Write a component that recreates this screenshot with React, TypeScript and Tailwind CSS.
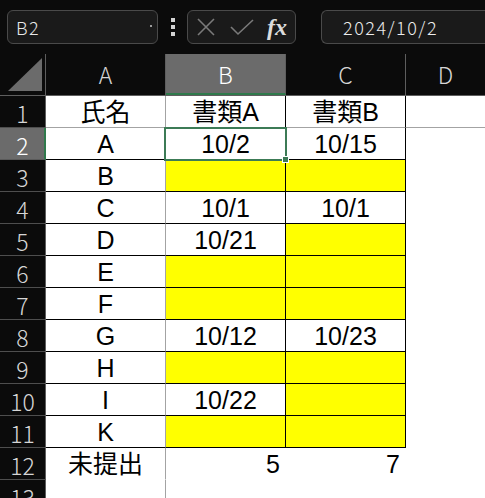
import React from 'react';

const GREEN = '#3c7b56';

// null = yellow (not submitted)
const data: (string | null)[][] = [
  ['氏名', '書類A', '書類B'],
  ['A', '10/2', '10/15'],
  ['B', null, null],
  ['C', '10/1', '10/1'],
  ['D', '10/21', null],
  ['E', null, null],
  ['F', null, null],
  ['G', '10/12', '10/23'],
  ['H', null, null],
  ['I', '10/22', null],
  ['K', null, null],
  ['未提出', '5', '7'],
  ['', '', ''],
];

const headFont = { fontFamily: '"Noto Sans CJK JP", "Noto Sans", sans-serif' };
const cellFont = { fontFamily: '"Liberation Sans", "Noto Sans CJK JP", sans-serif' };

function TopBar() {
  return (
    <div className="flex h-[54px] items-center bg-[#0b0b0b]" style={headFont}>
      <div className="ml-[7px] flex h-[34px] w-[151px] items-center justify-between rounded-[6px] border border-[#4a4a4a] bg-[#1a1a1a] pl-[8px] pr-[5px]">
        <span className="text-[18px] font-light tracking-[1.5px] text-[#e8e8e8]">B2</span>
        <span className="mt-[-2px] h-[2px] w-[2px] bg-[#9a9a9a]" />
      </div>
      <div className="ml-[13px] flex w-[4px] flex-col gap-[3px]">
        <span className="h-[4px] w-[4px] bg-[#d4d4d4]" />
        <span className="h-[4px] w-[4px] bg-[#d4d4d4]" />
        <span className="h-[4px] w-[4px] bg-[#d4d4d4]" />
      </div>
      <div className="ml-[12px] flex h-[34px] w-[109px] items-center rounded-[6px] border border-[#4a4a4a] bg-[#1a1a1a] pl-[8px]">
        <svg width="20" height="20" viewBox="0 0 20 20" className="shrink-0">
          <path d="M2 2 L18 18 M18 2 L2 18" stroke="#7a7a7a" strokeWidth="1.6" fill="none" />
        </svg>
        <svg width="26" height="18" viewBox="0 0 26 18" className="ml-[13px] shrink-0">
          <path d="M2 9 L9 16 L24 2" stroke="#7a7a7a" strokeWidth="1.6" fill="none" />
        </svg>
        <span
          className="ml-[12px] text-[24px] font-bold italic leading-none text-[#dcdcdc]"
          style={{ fontFamily: '"Liberation Serif", serif' }}
        >
          fx
        </span>
      </div>
      <div className="ml-[25px] flex h-[34px] flex-1 items-center rounded-l-[6px] border border-r-0 border-[#4a4a4a] bg-[#1a1a1a] pl-[21px]">
        <span className="text-[18px] font-light tracking-[1.5px] text-[#ededed]">2024/10/2</span>
      </div>
    </div>
  );
}

function ColumnHeader() {
  const cols = ['A', 'B', 'C', 'D'];
  return (
    <div className="flex h-[42px] border-b border-[#5e5e5e] bg-[#0b0b0b]" style={headFont}>
      <div className="relative w-[46px] shrink-0 border-r border-[#5e5e5e]">
        <svg width="46" height="41" viewBox="0 0 46 41" className="absolute left-0 top-0">
          <polygon points="8,37 42,4 42,37" fill="#6b6b6b" />
        </svg>
      </div>
      {cols.map((c) => (
        <div
          key={c}
          className={
            c === 'B'
              ? 'flex w-[120px] shrink-0 items-center justify-center border-r border-b-[2px] border-r-[#5e5e5e] border-b-[#2f7a4c] bg-[#6b6b6b] pt-[2px] text-[23px] font-light text-white'
              : c === 'D'
                ? 'flex flex-1 items-center justify-center text-[23px] font-light text-[#d6d6d6]'
                : 'flex w-[120px] shrink-0 items-center justify-center border-r border-[#5e5e5e] text-[23px] font-light text-[#d6d6d6]'
          }
        >
          {c}
        </div>
      ))}
    </div>
  );
}

function Cell({ value, col, row }: { value: string | null; col: number; row: number }) {
  const yellow = value === null;
  const inTable = row <= 11;
  const rightBorder =
    col === 0 ? 'border-r-[#a3a3a3]' : inTable ? 'border-r-black' : 'border-r-white';
  const bottomBorder =
    row === 1 ? 'border-b-[#a3a3a3]' : row <= 11 ? 'border-b-black' : 'border-b-white';
  const right = row === 12 && col > 0;
  return (
    <div
      className={[
        'flex w-[120px] shrink-0 items-center border-r border-b pt-[1px] text-[25px] leading-none text-black',
        rightBorder,
        bottomBorder,
        yellow ? 'bg-[#ffff00]' : 'bg-white',
        right ? 'justify-end pr-[5px]' : 'justify-center',
      ].join(' ')}
      style={cellFont}
    >
      {value}
    </div>
  );
}

function Row({ cells, row }: { cells: (string | null)[]; row: number }) {
  const selected = row === 2;
  return (
    <div className="flex h-[32px]">
      <div
        className={
          selected
            ? 'flex w-[46px] shrink-0 items-center justify-center border-b border-r-[2px] border-b-[#5a5a5a] border-r-[#2f7a4c] bg-[#6b6b6b] pl-[1px] pt-[3px] text-[23px] font-light text-white'
            : 'flex w-[46px] shrink-0 items-center justify-center border-b border-r border-b-[#4e4e4e] border-r-[#5e5e5e] bg-[#0b0b0b] pt-[3px] text-[23px] font-light text-[#d6d6d6]'
        }
        style={headFont}
      >
        {row}
      </div>
      {cells.map((v, i) => (
        <Cell key={i} value={v} col={i} row={row} />
      ))}
      <div
        className={
          row === 1
            ? 'flex-1 border-b border-b-[#a3a3a3] bg-white'
            : 'flex-1 bg-white'
        }
      />
    </div>
  );
}

export default function App() {
  return (
    <div className="h-[498px] w-[485px] overflow-hidden bg-[#0b0b0b]">
      <TopBar />
      <ColumnHeader />
      <div className="relative">
        {data.map((cells, i) => (
          <Row key={i} cells={cells} row={i + 1} />
        ))}
        {/* active cell B2 */}
        <div
          className="pointer-events-none absolute left-[164px] top-[31px] h-[34px] w-[123px] border-2"
          style={{ borderColor: GREEN }}
        />
        <div
          className="pointer-events-none absolute left-[282px] top-[60px] h-[7px] w-[7px] border border-white"
          style={{ backgroundColor: GREEN }}
        />
      </div>
    </div>
  );
}
